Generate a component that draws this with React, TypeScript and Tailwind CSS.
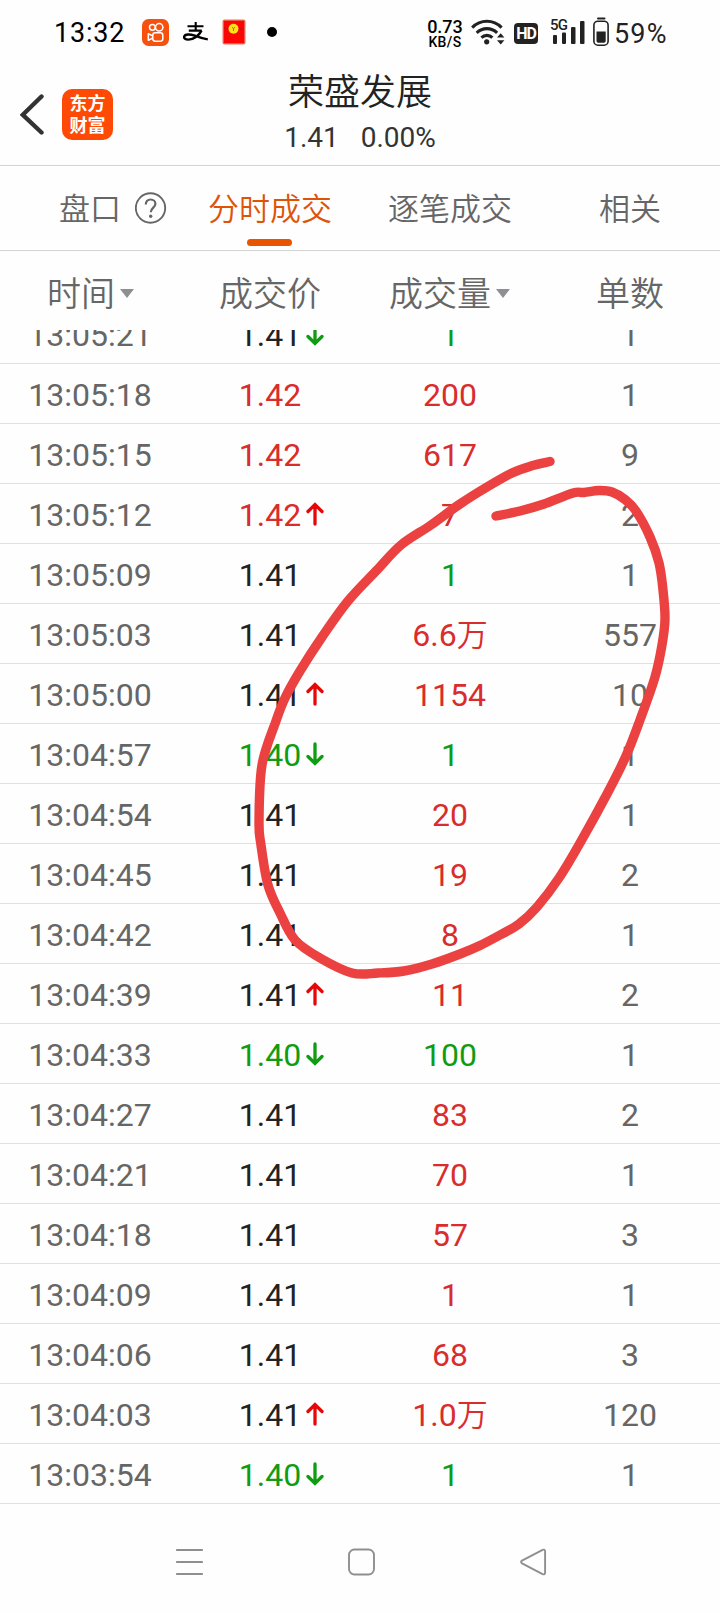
import { clsx } from "clsx";

type Tone = "up" | "down" | "flat";

interface Trade {
  time: string;
  price: string;
  priceTone: Tone;
  arrow?: "up" | "down";
  volume: string;
  unit?: string;
  volumeTone: Tone;
  count: string;
}

const trades: Trade[] = [
  { time: "13:05:21", price: "1.41", priceTone: "flat", arrow: "down", volume: "1", volumeTone: "down", count: "1" },
  { time: "13:05:18", price: "1.42", priceTone: "up", volume: "200", volumeTone: "up", count: "1" },
  { time: "13:05:15", price: "1.42", priceTone: "up", volume: "617", volumeTone: "up", count: "9" },
  { time: "13:05:12", price: "1.42", priceTone: "up", arrow: "up", volume: "7", volumeTone: "up", count: "2" },
  { time: "13:05:09", price: "1.41", priceTone: "flat", volume: "1", volumeTone: "down", count: "1" },
  { time: "13:05:03", price: "1.41", priceTone: "flat", volume: "6.6", unit: "万", volumeTone: "up", count: "557" },
  { time: "13:05:00", price: "1.41", priceTone: "flat", arrow: "up", volume: "1154", volumeTone: "up", count: "10" },
  { time: "13:04:57", price: "1.40", priceTone: "down", arrow: "down", volume: "1", volumeTone: "down", count: "1" },
  { time: "13:04:54", price: "1.41", priceTone: "flat", volume: "20", volumeTone: "up", count: "1" },
  { time: "13:04:45", price: "1.41", priceTone: "flat", volume: "19", volumeTone: "up", count: "2" },
  { time: "13:04:42", price: "1.41", priceTone: "flat", volume: "8", volumeTone: "up", count: "1" },
  { time: "13:04:39", price: "1.41", priceTone: "flat", arrow: "up", volume: "11", volumeTone: "up", count: "2" },
  { time: "13:04:33", price: "1.40", priceTone: "down", arrow: "down", volume: "100", volumeTone: "down", count: "1" },
  { time: "13:04:27", price: "1.41", priceTone: "flat", volume: "83", volumeTone: "up", count: "2" },
  { time: "13:04:21", price: "1.41", priceTone: "flat", volume: "70", volumeTone: "up", count: "1" },
  { time: "13:04:18", price: "1.41", priceTone: "flat", volume: "57", volumeTone: "up", count: "3" },
  { time: "13:04:09", price: "1.41", priceTone: "flat", volume: "1", volumeTone: "up", count: "1" },
  { time: "13:04:06", price: "1.41", priceTone: "flat", volume: "68", volumeTone: "up", count: "3" },
  { time: "13:04:03", price: "1.41", priceTone: "flat", arrow: "up", volume: "1.0", unit: "万", volumeTone: "up", count: "120" },
  { time: "13:03:54", price: "1.40", priceTone: "down", arrow: "down", volume: "1", volumeTone: "down", count: "1" },
];

const toneClass: Record<Tone, string> = {
  up: "text-[#d92c2c]",
  down: "text-[#109c10]",
  flat: "text-[#222222]",
};

// Hand-drawn marker, in page coordinates
const strokePoints: [number, number][] = [
  [550, 461.5], [531, 466], [512, 473], [487, 487], [460, 504], [431, 525], [401, 545], [377, 570],
  [348, 601], [322, 637], [300, 671], [285, 698], [276, 721], [262, 765], [259, 822], [261, 845],
  [268, 885], [280, 913], [295, 940], [320, 958], [352, 973], [378, 973], [404, 971], [432, 964],
  [460, 954], [480, 945.5], [500, 935], [519, 924], [537, 907], [559, 878], [580, 843], [607, 794],
  [626, 756], [640, 720], [655, 677], [662, 645], [665, 619], [663, 590], [659, 563], [650, 537],
  [636, 511], [625, 499.5], [612, 492], [599, 490.5], [584, 492.5], [573, 493], [544, 504], [520, 511], [496, 516],
];

const smoothPath = (points: [number, number][]) => {
  let d = `M${points[0][0]} ${points[0][1]}`;
  for (let i = 0; i < points.length - 1; i++) {
    const a = points[Math.max(i - 1, 0)];
    const b = points[i];
    const c = points[i + 1];
    const e = points[Math.min(i + 2, points.length - 1)];
    d += `C${b[0] + (c[0] - a[0]) / 6} ${b[1] + (c[1] - a[1]) / 6} ${c[0] - (e[0] - b[0]) / 6} ${c[1] - (e[1] - b[1]) / 6} ${c[0]} ${c[1]}`;
  }
  return d;
};

function StatusBar() {
  return (
    <div className="flex h-16 items-center pl-[54px] text-black">
      <span className="mt-[2px] w-[88px] text-[27px] leading-none tracking-[0.8px]">13:32</span>

      {/* Kuaishou */}
      <svg width="27" height="27" viewBox="0 0 27 27" fill="none" stroke="#fff" strokeWidth="1.5">
        <rect width="27" height="27" rx="6.5" fill="#f8510f" stroke="none" />
        <circle cx="10.4" cy="8.3" r="2.9" />
        <circle cx="17.2" cy="8.3" r="3.7" />
        <rect x="10.8" y="13.8" width="10" height="8.4" rx="2.4" />
        <path d="M10.8 17 6.3 14.7v6.6l4.5-2.3" strokeLinejoin="round" />
      </svg>

      {/* Alipay */}
      <svg className="ml-[14px]" width="26" height="20" viewBox="0 0 26 20" fill="none" stroke="#000" strokeWidth="2.1">
        <path d="M4.5 4.2h16M12.7 0v8.5M5.8 8.6h13" />
        <path d="M18.5 8.6C16 13.5 10.5 17.6 5.5 17.6 1.8 17.6.8 16 1.2 14.5 2 12 7 12 11 13.4c5 1.8 8 3.1 13.8 4" strokeWidth="2.4" />
      </svg>

      {/* Red packet */}
      <svg className="ml-[13px]" width="24" height="26" viewBox="0 0 24 26">
        <rect x="0.5" y="0.5" width="23" height="25" rx="2" fill="#f0705c" />
        <rect x="1.8" y="1.8" width="20.4" height="22.4" fill="#fb0505" />
        <path d="M2 9.5q10 2 20 0" fill="none" stroke="#d01010" />
        <circle cx="11.5" cy="9.8" r="5" fill="#ffe11a" />
        <path d="m10.1 8 1.4 1.8L12.9 8M11.5 9.8v2.2" fill="none" stroke="#a8760a" strokeWidth="1" />
      </svg>
      <span className="ml-[21px] size-[10px] rounded-full bg-black" />

      <div className="ml-[150px] flex w-[36px] flex-col items-center pt-[2px] font-medium">
        <span className="text-[18px] leading-[18px]">0.73</span>
        <span className="text-[14px] leading-[13px] tracking-[0.4px]">KB/S</span>
      </div>

      {/* Wi-Fi */}
      <svg className="ml-[8px]" width="34" height="27" viewBox="0 0 34 27" fill="none" stroke="#222" strokeWidth="3.1">
        <path d="M1.2 8.6C9.5.2 22.3.2 30.6 8.6" />
        <path d="M5.7 13.8c5.9-5.6 14.5-5.6 20.4 0" />
        <path d="M10.4 18.6c3.2-3 7.8-3 11 0" />
        <circle cx="15.7" cy="22.8" r="2.6" fill="#222" stroke="none" />
        <path d="m29.7 14.3 3.7 4.3h-7.4zM29.7 25.6l3.7-4.3h-7.4z" fill="#222" stroke="none" />
      </svg>

      <span className="mt-[3px] ml-[9px] flex h-[21px] w-[24px] items-center justify-center rounded-[4px] bg-[#222] pt-px text-[16px] leading-none font-bold tracking-[-1px] text-white">
        HD
      </span>

      {/* Mobile signal */}
      <div className="relative ml-[12px] h-[28px] w-[35px]">
        <span className="absolute top-0 left-0 text-[15px] leading-[14px] font-medium tracking-[-0.8px] text-[#222]">5G</span>
        <svg width="35" height="28" viewBox="0 0 35 28" fill="#222">
          <rect x="3" y="17" width="4" height="9" rx="1" />
          <rect x="12" y="14.5" width="4" height="11.5" rx="1" />
          <rect x="21" y="9" width="4.5" height="17" rx="1" />
          <rect x="30" y="3" width="4.5" height="23" rx="1" />
        </svg>
      </div>

      {/* Battery */}
      <svg className="ml-[8px]" width="16" height="30" viewBox="0 0 16 30">
        <rect x="4" y="0.5" width="8.5" height="2" rx="1" fill="#222" />
        <rect x="0.9" y="4.2" width="14.2" height="24" rx="4" fill="none" stroke="#222" strokeWidth="1.6" />
        <path d="M3.5 14.5h9.2V24a1.7 1.7 0 0 1-1.7 1.7H5.2A1.7 1.7 0 0 1 3.5 24z" fill="#222" />
      </svg>
      <span className="mt-[4px] ml-[5px] text-[27px] leading-none tracking-[1.2px] text-[#222]">59%</span>
    </div>
  );
}

function TitleBar() {
  return (
    <header className="grid h-[102px] grid-cols-[1fr_auto_1fr] border-b border-[#d4d4d4]">
      <div className="flex items-center gap-[18px] pl-5">
        <svg width="24" height="42" viewBox="0 0 24 42" fill="none" stroke="#333" strokeWidth="4.4" strokeLinecap="round">
          <path d="M21.5 2.5 2.8 20.8 21.5 38.5" />
        </svg>
        <div className="flex size-[51px] flex-col items-center justify-center rounded-[10px] bg-[#ff4a05] text-[18px] leading-[21.5px] font-bold text-white">
          <span>东方</span>
          <span>财富</span>
        </div>
      </div>
      <div className="flex flex-col items-center text-[#222]">
        <h1 className="mt-[8px] text-[36px] leading-[42px] font-[350]">荣盛发展</h1>
        <p className="mt-[7px] flex gap-[22px] text-[28px] leading-[34px] text-[#333]">
          <span>1.41</span>
          <span>0.00%</span>
        </p>
      </div>
    </header>
  );
}

function Tabs() {
  return (
    <nav className="grid h-[85px] grid-cols-4 border-b border-[#d4d4d4] text-[31px] leading-[87px] font-[350] text-[#666]">
      <div className="flex h-[86px] items-center pl-[59px]">
        盘口
        <svg className="-mt-[3px] ml-[14px]" width="32" height="32" viewBox="0 0 32 32" fill="none" stroke="#666" strokeWidth="1.9">
          <circle cx="15.5" cy="16" r="14.7" />
          <path d="M10.8 12.4c0-3 2-4.9 4.8-4.9s4.8 1.8 4.8 4.4c0 3.6-4.6 3.9-4.6 8.3" strokeWidth="2.2" />
          <circle cx="15.7" cy="24.2" r="1.7" fill="#666" stroke="none" />
        </svg>
      </div>
      <div className="relative h-[84px] text-center text-[#dd5408]">
        分时成交
        <span className="absolute bottom-[4px] left-[67px] h-[7px] w-[45px] rounded-full bg-[#e85500]" />
      </div>
      <div className="text-center">逐笔成交</div>
      <div className="text-center">相关</div>
    </nav>
  );
}

function Caret() {
  return (
    <svg className="-mt-[2px] ml-[5px]" width="14" height="9" viewBox="0 0 14 9" fill="#8e8e93">
      <path d="M0 0h14L7 9z" />
    </svg>
  );
}

function ColumnHeads() {
  return (
    <div className="grid h-[79px] grid-cols-4 text-[34px] leading-[86px] font-[350] text-[#666]">
      <div className="flex h-[86px] items-center pl-[47px]">
        时间
        <Caret />
      </div>
      <div className="text-center">成交价</div>
      <div className="flex h-[86px] items-center pl-[29px]">
        成交量
        <Caret />
      </div>
      <div className="text-center">单数</div>
    </div>
  );
}

function Arrow({ dir }: { dir: "up" | "down" }) {
  return (
    <svg
      className={clsx("absolute top-[18px] left-[125.5px]", dir === "up" ? "text-[#e60808]" : "rotate-180 text-[#109c10]")}
      width="18"
      height="24"
      viewBox="0 0 18 24"
      fill="none"
      stroke="currentColor"
      strokeWidth="3.3"
      strokeLinecap="round"
    >
      <path d="M9 22V3M2 9.5 9 2.5l7 7" />
    </svg>
  );
}

function TradeRow({ trade }: { trade: Trade }) {
  return (
    <div className="grid h-[60px] shrink-0 grid-cols-4 border-b border-[#e0e0e0] text-center text-[32px] leading-[63px] text-[#666]">
      <div>{trade.time}</div>
      <div className={clsx("relative", toneClass[trade.priceTone])}>
        {trade.price}
        {trade.arrow && <Arrow dir={trade.arrow} />}
      </div>
      <div className={toneClass[trade.volumeTone]}>
        {trade.volume}
        {trade.unit && <span className="text-[31px] font-[350]">{trade.unit}</span>}
      </div>
      <div>{trade.count}</div>
    </div>
  );
}

function NavBar() {
  return (
    <div className="flex flex-1 items-center pt-[8px] pl-[176px]">
      <svg width="27" height="28" viewBox="0 0 27 28" stroke="#8f8f8f" strokeWidth="2.2" strokeLinecap="round">
        <path d="M1 2h25M1 14h25M1 26h25" />
      </svg>
      <svg className="ml-[145px]" width="27" height="28" viewBox="0 0 27 28" fill="none" stroke="#8f8f8f" strokeWidth="1.9">
        <rect x="1" y="1.5" width="25" height="25" rx="5.5" />
      </svg>
      <svg className="ml-[145px]" width="27" height="28" viewBox="0 0 27 28" fill="none" stroke="#8f8f8f" strokeWidth="1.9" strokeLinejoin="round">
        <path d="M2 12.6 22.6 1.9q2.5-1 2.5 1.5v21.2q0 2.5-2.5 1.5L2 15.4q-1.8-1.4 0-2.8z" />
      </svg>
    </div>
  );
}

export default function App() {
  return (
    <div className="relative flex h-[1612px] w-[720px] flex-col overflow-hidden bg-[#fefefe] font-['Roboto','Noto_Sans_CJK_SC',sans-serif]">
      <StatusBar />
      <TitleBar />
      <Tabs />
      <ColumnHeads />
      {/* Scrolled list: the first row is half hidden under the column heads */}
      <div className="flex h-[1174px] shrink-0 flex-col justify-end overflow-hidden">
        {trades.map((trade) => (
          <TradeRow key={trade.time} trade={trade} />
        ))}
      </div>
      <NavBar />

      <svg className="pointer-events-none absolute inset-0" width="720" height="1612" viewBox="0 0 720 1612" fill="none">
        <path d={smoothPath(strokePoints)} stroke="#ec4141" strokeWidth="9.4" strokeLinecap="round" strokeLinejoin="round" />
      </svg>
    </div>
  );
}
